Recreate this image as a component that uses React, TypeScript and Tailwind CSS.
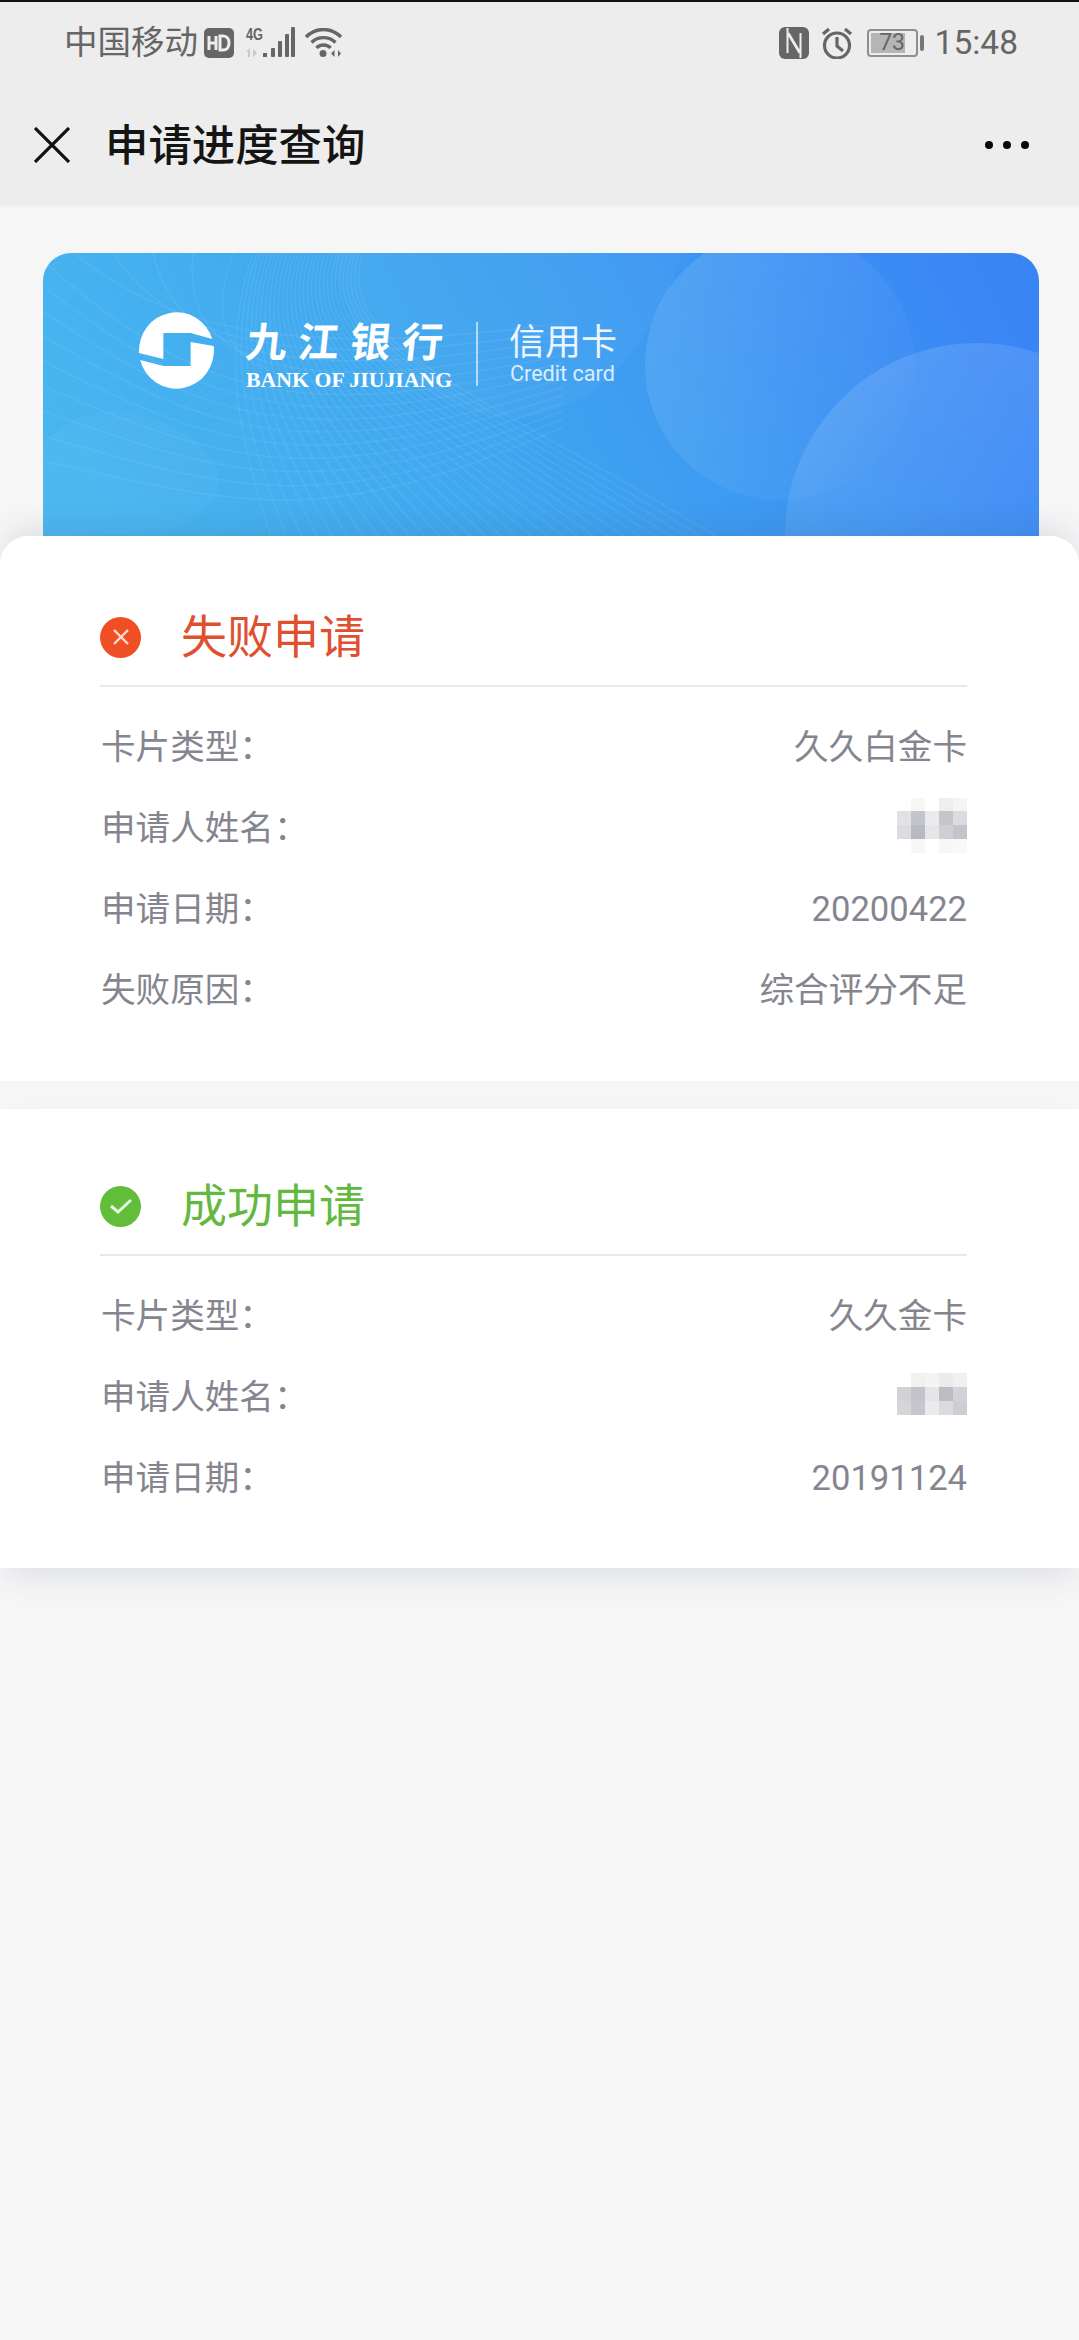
const waveRows = Array.from({ length: 14 }, (_, i) => i);
const fanLines = Array.from({ length: 30 }, (_, i) => i / 29);

const pixelsFailed = [
  'bg-transparent', 'bg-[#f6f6f7]', 'bg-transparent', 'bg-[#eeeeef]', 'bg-[#f5f5f5]',
  'bg-[#e2e2e5]', 'bg-[#c4c4cb]', 'bg-[#ebebed]', 'bg-[#c5c5cb]', 'bg-[#dcdce0]',
  'bg-[#dcdce0]', 'bg-[#b9b9c1]', 'bg-[#e6e6e9]', 'bg-[#cfcfd4]', 'bg-[#c4c4ca]',
  'bg-transparent', 'bg-[#f7f7f8]', 'bg-transparent', 'bg-[#f7f7f8]', 'bg-[#f9f9fa]',
];

const pixelsSuccess = [
  'bg-transparent', 'bg-[#f1f1f2]', 'bg-[#f4f4f5]', 'bg-[#ebebed]', 'bg-[#f0f0f1]',
  'bg-[#d2d2d6]', 'bg-[#c3c3c9]', 'bg-[#e5e5e8]', 'bg-[#bcbcc3]', 'bg-[#d2d2d8]',
  'bg-[#d6d6da]', 'bg-[#c6c6cc]', 'bg-[#ebebed]', 'bg-[#dcdce0]', 'bg-[#cdcdd2]',
];

const CardArt = () => (
  <svg className="absolute inset-0" width="996" height="283" viewBox="0 0 996 283" fill="none">
    <defs>
      <linearGradient id="cardBg" x1="0" y1="0.5" x2="1" y2="0.35">
        <stop offset="0" stopColor="#48b5f0" />
        <stop offset="0.42" stopColor="#3fa6ef" />
        <stop offset="1" stopColor="#3a85f6" />
      </linearGradient>
      <linearGradient id="circleFade" x1="0" y1="0.1" x2="1" y2="0.7">
        <stop offset="0" stopColor="#ffffff" stopOpacity="0.12" />
        <stop offset="1" stopColor="#ffffff" stopOpacity="0.01" />
      </linearGradient>
      <linearGradient id="circleFadeLow" x1="0.3" y1="0" x2="0.7" y2="1">
        <stop offset="0" stopColor="#ffffff" stopOpacity="0.13" />
        <stop offset="0.6" stopColor="#ffffff" stopOpacity="0.03" />
      </linearGradient>
    </defs>
    <rect width="996" height="283" fill="url(#cardBg)" />
    <path d="M290 0C296 60 330 120 420 155C520 190 600 120 640 0Z" fill="#ffffff" fillOpacity="0.03" />
    <path d="M0 190C40 150 90 150 140 180C190 210 190 250 130 275C80 283 30 283 0 283Z" fill="#ffffff" fillOpacity="0.03" />
    <circle cx="737" cy="112" r="135" fill="url(#circleFade)" />
    <circle cx="934" cy="282" r="192" fill="url(#circleFadeLow)" />
    <g stroke="#ffffff" strokeOpacity="0.07" strokeWidth="1.5">
      {waveRows.map((i) => (
        <path
          key={i}
          d={`M${i < 5 ? 30 + i * 40 : 0} ${i < 5 ? 0 : (i - 5) * 25 + 8}C${120 + i * 6} ${70 + i * 14} ${230 + i * 4} ${110 + i * 13} 520 ${70 + i * 8}`}
        />
      ))}
      {fanLines.map((t) => (
        <path
          key={t}
          d={`M${210 + t * 110} 0C${180 + t * 110} 90 ${190 + t * 230} ${170 - t * 40} ${228 + t * 445} 283`}
        />
      ))}
    </g>
  </svg>
);

const BankLogo = () => (
  <svg width="75" height="77" viewBox="0 0 77 77" preserveAspectRatio="none" fill="#ffffff">
    <path d="M0.1 41A38.5 38.5 0 0 1 75.2 27L53 21H25V47Z" />
    <path d="M76.7 34A38.5 38.5 0 0 1 1.2 48L25 54H53V30Z" />
  </svg>
);

const Pixelated = ({ cells, rows }: { cells: string[]; rows: string }) => (
  <div className={`grid grid-cols-[repeat(5,14px)] ${rows}`}>
    {cells.map((c, i) => (
      <div key={i} className={c} />
    ))}
  </div>
);

const Row = ({ label, children }: { label: string; children: React.ReactNode }) => (
  <div className="flex h-[81px] items-center justify-between text-[34.6px] text-[#85858f]">
    <span className="pl-px">{label}：</span>
    {children}
  </div>
);

const SectionTitle = ({ title, color, bg, icon }: { title: string; color: string; bg: string; icon: React.ReactNode }) => (
  <div className={`flex h-[98px] items-center gap-[40px] border-b-2 border-[#e9e9ea] text-[46px] ${color}`}>
    <div className={`flex h-[41px] w-[41px] items-center justify-center rounded-full ${bg}`}>{icon}</div>
    <span>{title}</span>
  </div>
);

export default function App() {
  return (
    <div className="flex min-h-screen w-full flex-col bg-[#f6f6f7] font-['Roboto','Noto_Sans_CJK_SC',sans-serif]">
      <div className="bg-[#ededed] shadow-[0_2px_3px_rgba(0,0,0,0.03)]">
        <div className="h-[2px] bg-[#111111]" />
        {/* status bar */}
        <div className="flex h-[84px] items-center justify-between pb-[3px] pl-[64px] pr-[61px] text-[#666666]">
          <div className="flex items-center">
            <span className="text-[33.5px] leading-none">中国移动</span>
            <svg className="ml-[6px]" width="30" height="30" viewBox="0 0 30 30">
              <rect width="30" height="30" rx="5" fill="#666666" />
              <path d="M5 8v14M12 8v14M5 15h7" stroke="#ededed" strokeWidth="3" fill="none" />
              <path d="M16 8v14h3c4 0 6-3 6-7s-2-7-6-7z" stroke="#ededed" strokeWidth="3" fill="none" />
            </svg>
            <svg className="ml-[11px]" width="51" height="31" viewBox="0 0 51 31" fill="#666666">
              <text x="1" y="13" fontSize="16" fontWeight="700" textLength="17" lengthAdjust="spacingAndGlyphs" fontFamily="'Liberation Sans', sans-serif">4G</text>
              <path d="M1 25l4-4v9H3v-5zM8 22l4 4-4 4z" fill="#c8c8c8" />
              <rect x="18" y="26" width="4" height="4" />
              <rect x="26" y="21" width="4" height="9" rx="1" />
              <rect x="33" y="14" width="4" height="16" rx="1" />
              <rect x="40" y="7" width="4" height="23" rx="1" />
              <rect x="46" y="0" width="4" height="30" rx="1" />
            </svg>
            <svg className="ml-[9px]" width="37" height="30" viewBox="0 0 37 30" fill="none" stroke="#666666" strokeWidth="3.4">
              <path d="M1 9C11 -1 26 -1 36 9" />
              <path d="M6.5 14.5C13 8 24 8 30.5 14.5" />
              <path d="M11.5 20C15 16 22 16 25.5 20" />
              <circle cx="18" cy="25.5" r="3.5" fill="#666666" stroke="none" />
              <path d="M26 25.5l3.5-3.5v7zM36 25.5l-3-3.5v7z" fill="#666666" stroke="none" />
            </svg>
          </div>
          <div className="flex items-center">
            <svg width="30" height="32" viewBox="0 0 30 32">
              <rect width="30" height="32" rx="6" fill="#666666" />
              <path d="M8.5 1V26M8.5 6L20.5 26M21.5 31V6M21.5 26L9.5 6" stroke="#ededed" strokeWidth="2" fill="none" />
            </svg>
            <svg className="ml-[12px]" width="32" height="32" viewBox="0 0 32 32" fill="none" stroke="#666666" strokeWidth="3.2">
              <circle cx="16" cy="18.5" r="12.5" />
              <path d="M16 10v9l6 5M2 7l6-5M30 7l-6-5" />
            </svg>
            <div className="ml-[14px] flex items-center">
              <div className="relative flex h-[28px] w-[51px] items-center justify-center rounded-[4px] border-2 border-[#8f8f8f] p-[2px]">
                <div className="absolute bottom-[2px] left-[2px] top-[2px] w-[34px] bg-[#b5b5b5]" />
                <span className="relative text-[23px] leading-none text-[#666666]">73</span>
              </div>
              <div className="ml-[2px] h-[16px] w-[4px] rounded-[2px] bg-[#777777]" />
            </div>
            <span className="ml-[11px] text-[33.5px] leading-none">15:48</span>
          </div>
        </div>
        {/* nav */}
        <div className="flex h-[119px] items-center justify-between pb-[2px] pl-[34px] pr-[50px]">
          <div className="flex items-center">
            <svg width="36" height="36" viewBox="0 0 36 36" fill="none" stroke="#111111" strokeWidth="3.2">
              <path d="M1 1l34 34M35 1L1 35" />
            </svg>
            <span className="ml-[35px] pt-[5px] text-[43.4px] font-medium leading-none text-[#141414]">申请进度查询</span>
          </div>
          <div className="flex items-center gap-[10px]">
            <div className="h-[8px] w-[8px] rounded-full bg-[#0a0a0a]" />
            <div className="h-[8px] w-[8px] rounded-full bg-[#0a0a0a]" />
            <div className="h-[8px] w-[8px] rounded-full bg-[#0a0a0a]" />
          </div>
        </div>
      </div>

      {/* bank card */}
      <div className="px-[40px] pt-[48px]">
        <div className="relative ml-[3px] h-[283px] w-[996px] overflow-hidden rounded-t-[28px]">
          <CardArt />
          <div className="relative flex items-start pl-[96px] pt-[59px] text-white">
            <BankLogo />
            <div className="ml-[32px] flex flex-col pt-[7px]">
              <span className="-skew-x-6 text-[41px] font-bold leading-[49px] tracking-[11px]">九江银行</span>
              <span className="whitespace-nowrap font-['Liberation_Serif',serif] text-[21.8px] font-bold leading-[24px]">BANK OF JIUJIANG</span>
            </div>
            <div className="ml-[22px] mt-[10px] h-[64px] w-[2px] bg-white/60" />
            <div className="ml-[31px] flex flex-col pt-[11px]">
              <span className="text-[36px] leading-[40px] text-white/90">信用卡</span>
              <span className="ml-px whitespace-nowrap text-[21.6px] leading-[22px] text-white/80">Credit card</span>
            </div>
          </div>
        </div>
      </div>

      {/* failed */}
      <section className="relative rounded-t-[28px] bg-white pb-[50px] pl-[100px] pr-[112px] pt-[53px] shadow-[0_-14px_30px_-8px_rgba(60,70,90,0.14)]">
        <SectionTitle
          title="失败申请"
          color="text-[#e0502f]"
          bg="bg-[#f04f26]"
          icon={
            <svg width="18" height="18" viewBox="0 0 18 18" stroke="#fbdcd2" strokeWidth="2.4">
              <path d="M2 2l14 14M16 2L2 16" />
            </svg>
          }
        />
        <div className="pt-[20px]">
          <Row label="卡片类型"><span>久久白金卡</span></Row>
          <Row label="申请人姓名">
            <Pixelated cells={pixelsFailed} rows="grid-rows-[13px_14px_14px_14px] pb-[6px]" />
          </Row>
          <Row label="申请日期"><span>20200422</span></Row>
          <Row label="失败原因"><span>综合评分不足</span></Row>
        </div>
      </section>

      <div className="h-[28px] bg-[#f6f6f6]" />

      {/* success */}
      <section className="relative bg-white pb-[49px] pl-[100px] pr-[112px] pt-[49px] shadow-[0_14px_30px_-8px_rgba(60,70,90,0.14)]">
        <SectionTitle
          title="成功申请"
          color="text-[#63b83f]"
          bg="bg-[#62bd3b]"
          icon={
            <svg width="24" height="18" viewBox="0 0 24 18" fill="none" stroke="#eaf7e3" strokeWidth="3">
              <path d="M2 9l7 6L22 3" />
            </svg>
          }
        />
        <div className="pt-[20px]">
          <Row label="卡片类型"><span>久久金卡</span></Row>
          <Row label="申请人姓名">
            <Pixelated cells={pixelsSuccess} rows="grid-rows-[14px_14px_14px] pb-[8px]" />
          </Row>
          <Row label="申请日期"><span>20191124</span></Row>
        </div>
      </section>
    </div>
  );
}
